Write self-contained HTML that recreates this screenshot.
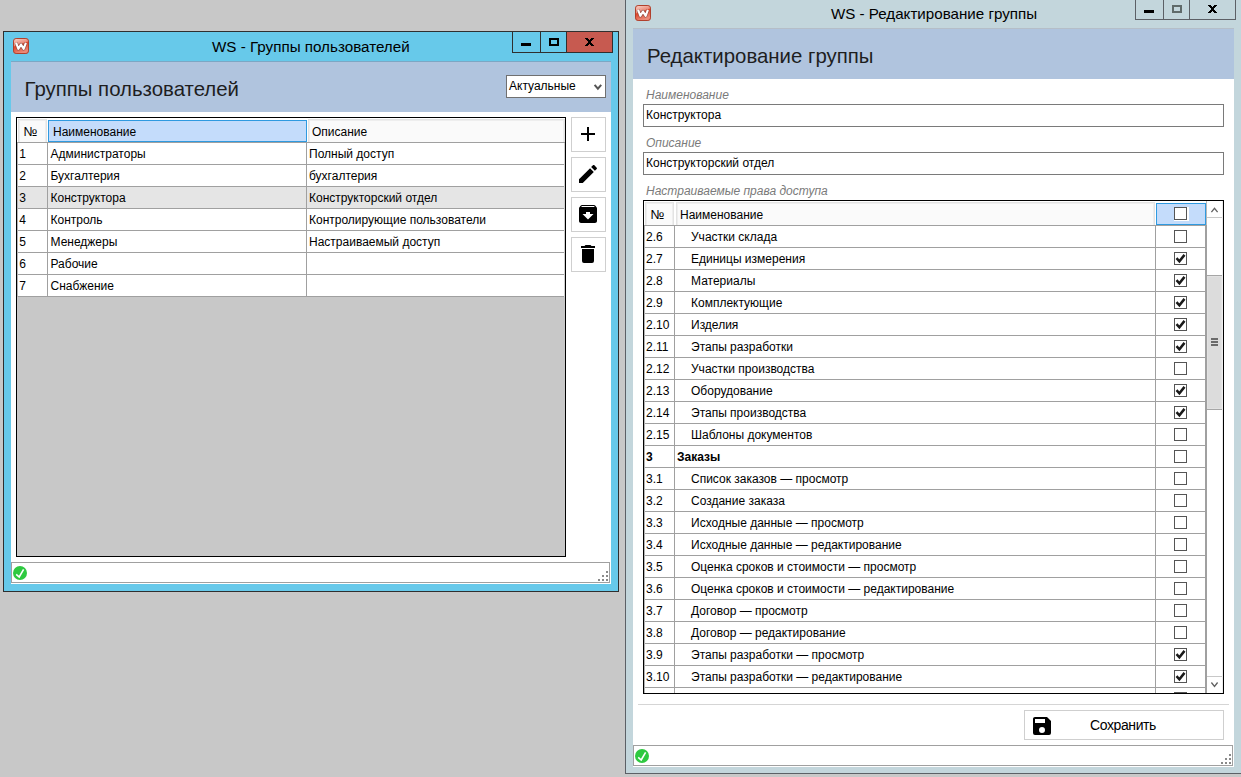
<!DOCTYPE html>
<html><head><meta charset="utf-8"><style>
html,body{margin:0;padding:0;}
body{width:1241px;height:777px;overflow:hidden;position:relative;background:#c8c8c8;font-family:"Liberation Sans", sans-serif;color:#000;}
body>div,body>svg{position:absolute;}
.t{white-space:nowrap;}
</style></head><body>
<div style="left:3px;top:31px;width:616px;height:561px;background:#67c9ea;box-sizing:border-box;border:1px solid #2f2f2f;"></div>
<svg style="left:13px;top:38px" width="16" height="16" viewBox="0 0 16 16"><defs><linearGradient id="wg" x1="0" y1="0" x2="0.35" y2="1"><stop offset="0" stop-color="#fad6cc"/><stop offset="0.44" stop-color="#ec8f7e"/><stop offset="0.52" stop-color="#de4328"/><stop offset="1" stop-color="#eb8a78"/></linearGradient></defs><rect x="0.5" y="0.5" width="15" height="15" rx="2.6" fill="url(#wg)" stroke="#b0402c" stroke-width="1"/><path d="M3.1 4.9 L5.4 10.8 L8 6.5 L10.6 10.8 L12.9 4.9" fill="none" stroke="#6a4a44" stroke-opacity="0.6" stroke-width="3.5" stroke-linejoin="round"/><path d="M3.1 4.9 L5.4 10.8 L8 6.5 L10.6 10.8 L12.9 4.9" fill="none" stroke="#fff" stroke-width="2.1" stroke-linejoin="round"/></svg>
<div class="t" style="left:212px;top:38.63px;font-size:15.2px;line-height:15.2px;color:#000;">WS - Группы пользователей</div>
<div style="left:512px;top:31px;width:101px;height:22px;box-sizing:border-box;border:1px solid #2f2f2f;border-top:none;"></div>
<div style="left:540px;top:31px;width:1px;height:22px;background:#2f2f2f;"></div>
<div style="left:566px;top:32px;width:47px;height:21px;background:#c75a50;box-sizing:border-box;border:1px solid #2f2f2f;border-top:none;border-left:1px solid #2f2f2f;"></div>
<div style="left:521px;top:43px;width:10px;height:3px;background:#000;"></div>
<div style="left:549px;top:38px;width:10px;height:8px;box-sizing:border-box;border:2px solid #000;border-top-width:2px;"></div>
<div style="left:585px;top:38px;width:3px;height:1px;background:#000;"></div>
<div style="left:591px;top:38px;width:3px;height:1px;background:#000;"></div>
<div style="left:586px;top:39px;width:3px;height:1px;background:#000;"></div>
<div style="left:590px;top:39px;width:3px;height:1px;background:#000;"></div>
<div style="left:587px;top:40px;width:5px;height:1px;background:#000;"></div>
<div style="left:588px;top:41px;width:3px;height:1px;background:#000;"></div>
<div style="left:588px;top:42px;width:3px;height:1px;background:#000;"></div>
<div style="left:587px;top:43px;width:5px;height:1px;background:#000;"></div>
<div style="left:586px;top:44px;width:3px;height:1px;background:#000;"></div>
<div style="left:590px;top:44px;width:3px;height:1px;background:#000;"></div>
<div style="left:585px;top:45px;width:3px;height:1px;background:#000;"></div>
<div style="left:591px;top:45px;width:3px;height:1px;background:#000;"></div>
<div style="left:11px;top:61px;width:600px;height:523px;background:#fff;"></div>
<div style="left:11px;top:61px;width:600px;height:51px;background:#b0c4de;"></div>
<div style="left:11px;top:61px;width:600px;height:1px;background:#7ca7c4;"></div>
<div class="t" style="left:24.5px;top:78.73px;font-size:20.4px;line-height:20.4px;color:#1e1e1e;">Группы пользователей</div>
<div style="left:506px;top:75px;width:100px;height:23px;background:#fff;box-sizing:border-box;border:1px solid #707070;"></div>
<div class="t" style="left:509px;top:79.64px;font-size:12px;line-height:12px;color:#000;">Актуальные</div>
<svg style="left:593px;top:83px" width="10" height="8" viewBox="0 0 10 8"><path d="M1.6 1.8 L4.9 5.6 L8.2 1.8" fill="none" stroke="#555" stroke-width="2"/></svg>
<div style="left:16px;top:117px;width:550px;height:440px;background:#c8c8c8;box-sizing:border-box;border:1px solid #000;"></div>
<div style="left:17px;top:118px;width:548px;height:24px;background:#fff;"></div>
<div style="left:18px;top:119px;width:29px;height:23px;background:#fafafa;box-sizing:border-box;border:1px solid #e3e3e3;border-bottom:none;box-shadow:inset 1px 1px 0 #eeeeee, inset -1px 0 0 #eeeeee;"></div>
<div style="left:48px;top:120px;width:259px;height:22px;background:#c4dcfb;box-sizing:border-box;border:1px solid #2f9ae0;"></div>
<div style="left:308px;top:119px;width:257px;height:23px;background:#fafafa;box-sizing:border-box;border:1px solid #e3e3e3;border-bottom:none;box-shadow:inset 1px 1px 0 #eeeeee, inset -1px 0 0 #eeeeee;"></div>
<div style="left:17px;top:142px;width:548px;height:1px;background:#a0a0a0;"></div>
<div class="t" style="left:23.6px;top:125.20px;font-size:13px;line-height:13px;">№</div>
<div class="t" style="left:53px;top:125.84px;font-size:12px;line-height:12px;">Наименование</div>
<div class="t" style="left:312px;top:125.84px;font-size:12px;line-height:12px;">Описание</div>
<div style="left:17px;top:143px;width:548px;height:21px;background:#fff;"></div>
<div style="left:17px;top:164px;width:548px;height:1px;background:#a0a0a0;"></div>
<div style="left:47px;top:143px;width:1px;height:21px;background:#a0a0a0;"></div>
<div style="left:306px;top:143px;width:1px;height:21px;background:#a0a0a0;"></div>
<div class="t" style="left:19.3px;top:147.84px;font-size:12px;line-height:12px;">1</div>
<div class="t" style="left:50.5px;top:147.84px;font-size:12px;line-height:12px;">Администраторы</div>
<div class="t" style="left:309px;top:147.84px;font-size:12px;line-height:12px;">Полный доступ</div>
<div style="left:17px;top:165px;width:548px;height:21px;background:#fff;"></div>
<div style="left:17px;top:186px;width:548px;height:1px;background:#a0a0a0;"></div>
<div style="left:47px;top:165px;width:1px;height:21px;background:#a0a0a0;"></div>
<div style="left:306px;top:165px;width:1px;height:21px;background:#a0a0a0;"></div>
<div class="t" style="left:19.3px;top:169.84px;font-size:12px;line-height:12px;">2</div>
<div class="t" style="left:50.5px;top:169.84px;font-size:12px;line-height:12px;">Бухгалтерия</div>
<div class="t" style="left:309px;top:169.84px;font-size:12px;line-height:12px;">бухгалтерия</div>
<div style="left:17px;top:187px;width:548px;height:21px;background:#e5e5e5;"></div>
<div style="left:17px;top:208px;width:548px;height:1px;background:#a0a0a0;"></div>
<div style="left:47px;top:187px;width:1px;height:21px;background:#a0a0a0;"></div>
<div style="left:306px;top:187px;width:1px;height:21px;background:#a0a0a0;"></div>
<div class="t" style="left:19.3px;top:191.84px;font-size:12px;line-height:12px;">3</div>
<div class="t" style="left:50.5px;top:191.84px;font-size:12px;line-height:12px;">Конструктора</div>
<div class="t" style="left:309px;top:191.84px;font-size:12px;line-height:12px;">Конструкторский отдел</div>
<div style="left:17px;top:209px;width:548px;height:21px;background:#fff;"></div>
<div style="left:17px;top:230px;width:548px;height:1px;background:#a0a0a0;"></div>
<div style="left:47px;top:209px;width:1px;height:21px;background:#a0a0a0;"></div>
<div style="left:306px;top:209px;width:1px;height:21px;background:#a0a0a0;"></div>
<div class="t" style="left:19.3px;top:213.84px;font-size:12px;line-height:12px;">4</div>
<div class="t" style="left:50.5px;top:213.84px;font-size:12px;line-height:12px;">Контроль</div>
<div class="t" style="left:309px;top:213.84px;font-size:12px;line-height:12px;">Контролирующие пользователи</div>
<div style="left:17px;top:231px;width:548px;height:21px;background:#fff;"></div>
<div style="left:17px;top:252px;width:548px;height:1px;background:#a0a0a0;"></div>
<div style="left:47px;top:231px;width:1px;height:21px;background:#a0a0a0;"></div>
<div style="left:306px;top:231px;width:1px;height:21px;background:#a0a0a0;"></div>
<div class="t" style="left:19.3px;top:235.84px;font-size:12px;line-height:12px;">5</div>
<div class="t" style="left:50.5px;top:235.84px;font-size:12px;line-height:12px;">Менеджеры</div>
<div class="t" style="left:309px;top:235.84px;font-size:12px;line-height:12px;">Настраиваемый доступ</div>
<div style="left:17px;top:253px;width:548px;height:21px;background:#fff;"></div>
<div style="left:17px;top:274px;width:548px;height:1px;background:#a0a0a0;"></div>
<div style="left:47px;top:253px;width:1px;height:21px;background:#a0a0a0;"></div>
<div style="left:306px;top:253px;width:1px;height:21px;background:#a0a0a0;"></div>
<div class="t" style="left:19.3px;top:257.84px;font-size:12px;line-height:12px;">6</div>
<div class="t" style="left:50.5px;top:257.84px;font-size:12px;line-height:12px;">Рабочие</div>
<div class="t" style="left:309px;top:257.84px;font-size:12px;line-height:12px;"></div>
<div style="left:17px;top:275px;width:548px;height:21px;background:#fff;"></div>
<div style="left:17px;top:296px;width:548px;height:1px;background:#a0a0a0;"></div>
<div style="left:47px;top:275px;width:1px;height:21px;background:#a0a0a0;"></div>
<div style="left:306px;top:275px;width:1px;height:21px;background:#a0a0a0;"></div>
<div class="t" style="left:19.3px;top:279.84px;font-size:12px;line-height:12px;">7</div>
<div class="t" style="left:50.5px;top:279.84px;font-size:12px;line-height:12px;">Снабжение</div>
<div class="t" style="left:309px;top:279.84px;font-size:12px;line-height:12px;"></div>
<div style="left:17px;top:143px;width:1px;height:154px;background:#b4b4b4;"></div>
<div style="left:564px;top:143px;width:1px;height:154px;background:#cfcfcf;"></div>
<div style="left:571px;top:117px;width:35px;height:35px;background:#fff;box-sizing:border-box;border:1px solid #cfcfcf;"></div>
<svg style="left:576px;top:122px" width="24" height="24" viewBox="0 0 24 24"><path d="M19,13H13V19H11V13H5V11H11V5H13V11H19V13Z" fill="#000"/></svg>
<div style="left:571px;top:157px;width:35px;height:35px;background:#fff;box-sizing:border-box;border:1px solid #cfcfcf;"></div>
<svg style="left:576px;top:162px" width="24" height="24" viewBox="0 0 24 24"><path d="M20.71,7.04C21.1,6.65 21.1,6 20.71,5.63L18.37,3.29C18,2.9 17.35,2.9 16.96,3.29L15.12,5.12L18.87,8.87M3,17.25V21H6.75L17.81,9.93L14.06,6.18L3,17.25Z" fill="#000"/></svg>
<div style="left:571px;top:197px;width:35px;height:35px;background:#fff;box-sizing:border-box;border:1px solid #cfcfcf;"></div>
<svg style="left:576px;top:202px" width="24" height="24" viewBox="0 0 24 24"><path d="M20.54 5.23L19.15 3.55C18.88 3.21 18.47 3 18 3H6C5.53 3 5.12 3.21 4.84 3.55L3.46 5.23C3.17 5.57 3 6 3 6.5V19C3 20.1 3.9 21 5 21H19C20.1 21 21 20.1 21 19V6.5C21 6 20.83 5.57 20.54 5.23M12 17.5L6.5 12H10V10H14V12H17.5L12 17.5M5.12 5L5.93 4H17.93L18.87 5H5.12Z" fill="#000"/></svg>
<div style="left:571px;top:237px;width:35px;height:35px;background:#fff;box-sizing:border-box;border:1px solid #cfcfcf;"></div>
<svg style="left:576px;top:242px" width="24" height="24" viewBox="0 0 24 24"><path d="M19,4H15.5L14.5,3H9.5L8.5,4H5V6H19M6,19A2,2 0 0,0 8,21H16A2,2 0 0,0 18,19V7H6V19Z" fill="#000"/></svg>
<div style="left:11px;top:562px;width:599px;height:21px;background:#fff;box-sizing:border-box;border:1px solid #a0a0a0;"></div>
<svg style="left:13px;top:566px" width="14" height="14" viewBox="0 0 14 14"><circle cx="7" cy="7" r="7" fill="#2ec940"/><path d="M3.2 8.4 L6.2 11.0 L10.6 3.4" fill="none" stroke="#fff" stroke-width="1.6"/></svg>
<div style="left:606px;top:579px;width:2px;height:2px;background:#8a8a8a;"></div>
<div style="left:602px;top:579px;width:2px;height:2px;background:#8a8a8a;"></div>
<div style="left:598px;top:579px;width:2px;height:2px;background:#8a8a8a;"></div>
<div style="left:606px;top:575px;width:2px;height:2px;background:#8a8a8a;"></div>
<div style="left:602px;top:575px;width:2px;height:2px;background:#8a8a8a;"></div>
<div style="left:606px;top:571px;width:2px;height:2px;background:#8a8a8a;"></div>
<div style="left:625px;top:-10px;width:626px;height:784px;background:#c3d6dc;box-sizing:border-box;border:1px solid #5c6066;"></div>
<svg style="left:635px;top:5px" width="16" height="16" viewBox="0 0 16 16"><defs><linearGradient id="wg2" x1="0" y1="0" x2="0.35" y2="1"><stop offset="0" stop-color="#fad6cc"/><stop offset="0.44" stop-color="#ec8f7e"/><stop offset="0.52" stop-color="#de4328"/><stop offset="1" stop-color="#eb8a78"/></linearGradient></defs><rect x="0.5" y="0.5" width="15" height="15" rx="2.6" fill="url(#wg2)" stroke="#b0402c" stroke-width="1"/><path d="M3.1 4.9 L5.4 10.8 L8 6.5 L10.6 10.8 L12.9 4.9" fill="none" stroke="#6a4a44" stroke-opacity="0.6" stroke-width="3.5" stroke-linejoin="round"/><path d="M3.1 4.9 L5.4 10.8 L8 6.5 L10.6 10.8 L12.9 4.9" fill="none" stroke="#fff" stroke-width="2.1" stroke-linejoin="round"/></svg>
<div class="t" style="left:831px;top:6.18px;font-size:15.15px;line-height:15.15px;color:#000;">WS - Редактирование группы</div>
<div style="left:1135px;top:-1px;width:101px;height:21px;box-sizing:border-box;border:1px solid #5c6066;border-top:none;"></div>
<div style="left:1163px;top:0px;width:1px;height:20px;background:#5c6066;"></div>
<div style="left:1189px;top:0px;width:1px;height:20px;background:#5c6066;"></div>
<div style="left:1144px;top:10px;width:10px;height:3px;background:#000;"></div>
<div style="left:1172px;top:5px;width:10px;height:8px;box-sizing:border-box;border:2px solid #5f6a6a;"></div>
<div style="left:1208px;top:5px;width:3px;height:1px;background:#000;"></div>
<div style="left:1214px;top:5px;width:3px;height:1px;background:#000;"></div>
<div style="left:1209px;top:6px;width:3px;height:1px;background:#000;"></div>
<div style="left:1213px;top:6px;width:3px;height:1px;background:#000;"></div>
<div style="left:1210px;top:7px;width:5px;height:1px;background:#000;"></div>
<div style="left:1211px;top:8px;width:3px;height:1px;background:#000;"></div>
<div style="left:1211px;top:9px;width:3px;height:1px;background:#000;"></div>
<div style="left:1210px;top:10px;width:5px;height:1px;background:#000;"></div>
<div style="left:1209px;top:11px;width:3px;height:1px;background:#000;"></div>
<div style="left:1213px;top:11px;width:3px;height:1px;background:#000;"></div>
<div style="left:1208px;top:12px;width:3px;height:1px;background:#000;"></div>
<div style="left:1214px;top:12px;width:3px;height:1px;background:#000;"></div>
<div style="left:633px;top:28px;width:601px;height:739px;background:#fff;"></div>
<div style="left:633px;top:28px;width:601px;height:51px;background:#b0c4de;"></div>
<div style="left:633px;top:28px;width:601px;height:1px;background:#b5bec8;"></div>
<div class="t" style="left:647px;top:46.43px;font-size:20.4px;line-height:20.4px;color:#1e1e1e;">Редактирование группы</div>
<div class="t" style="left:646px;top:88.84px;font-size:12px;line-height:12px;color:#7a7a7a;font-style:italic;">Наименование</div>
<div style="left:643px;top:104px;width:581px;height:23px;background:#fff;box-sizing:border-box;border:1px solid #7a7a7a;"></div>
<div class="t" style="left:646px;top:108.84px;font-size:12px;line-height:12px;">Конструктора</div>
<div class="t" style="left:646px;top:136.84px;font-size:12px;line-height:12px;color:#7a7a7a;font-style:italic;">Описание</div>
<div style="left:643px;top:152px;width:581px;height:23px;background:#fff;box-sizing:border-box;border:1px solid #7a7a7a;"></div>
<div class="t" style="left:646px;top:156.84px;font-size:12px;line-height:12px;">Конструкторский отдел</div>
<div class="t" style="left:646px;top:185.34px;font-size:12px;line-height:12px;color:#7a7a7a;font-style:italic;">Настраиваемые права доступа</div>
<div style="left:643px;top:200px;width:581px;height:494px;background:#fff;box-sizing:border-box;border:1px solid #000;"></div>
<div style="left:644px;top:201px;width:562px;height:24px;background:#fff;"></div>
<div style="left:645px;top:202px;width:29px;height:23px;background:#fafafa;box-sizing:border-box;border:1px solid #e3e3e3;border-bottom:none;box-shadow:inset 1px 1px 0 #eeeeee, inset -1px 0 0 #eeeeee;"></div>
<div style="left:676px;top:202px;width:479px;height:23px;background:#fafafa;box-sizing:border-box;border:1px solid #e3e3e3;border-bottom:none;box-shadow:inset 1px 1px 0 #eeeeee, inset -1px 0 0 #eeeeee;"></div>
<div style="left:1156px;top:203px;width:50px;height:22px;background:#c4dcfb;box-sizing:border-box;border:1px solid #2f9ae0;"></div>
<div style="left:644px;top:225px;width:562px;height:1px;background:#a0a0a0;"></div>
<div class="t" style="left:650.6px;top:208.20px;font-size:13px;line-height:13px;">№</div>
<div class="t" style="left:680px;top:208.84px;font-size:12px;line-height:12px;">Наименование</div>
<div style="left:1174px;top:207px;width:15px;height:14px;background:#fff;"></div>
<div style="left:1174px;top:207px;width:13px;height:13px;box-sizing:border-box;border:1px solid #555;background:#fff;"></div>
<div style="left:674px;top:226px;width:1px;height:21px;background:#a0a0a0;"></div>
<div style="left:1155px;top:226px;width:1px;height:21px;background:#a0a0a0;"></div>
<div style="left:644px;top:247px;width:562px;height:1px;background:#a0a0a0;"></div>
<div class="t" style="left:646px;top:230.84px;font-size:12px;line-height:12px;">2.6</div>
<div class="t" style="left:691px;top:230.84px;font-size:12px;line-height:12px;">Участки склада</div>
<div style="left:1174px;top:230px;width:13px;height:13px;box-sizing:border-box;border:1px solid #555;background:#fff;"></div>
<div style="left:674px;top:248px;width:1px;height:21px;background:#a0a0a0;"></div>
<div style="left:1155px;top:248px;width:1px;height:21px;background:#a0a0a0;"></div>
<div style="left:644px;top:269px;width:562px;height:1px;background:#a0a0a0;"></div>
<div class="t" style="left:646px;top:252.84px;font-size:12px;line-height:12px;">2.7</div>
<div class="t" style="left:691px;top:252.84px;font-size:12px;line-height:12px;">Единицы измерения</div>
<div style="left:1174px;top:252px;width:13px;height:13px;box-sizing:border-box;border:1px solid #555;background:#fff;"></div>
<svg style="left:1174px;top:252px" width="13" height="13" viewBox="0 0 13 13"><path d="M2.5 6.2 L5.4 9.3 L10.5 2.9" fill="none" stroke="#1a1a1a" stroke-width="2.5"/></svg>
<div style="left:674px;top:270px;width:1px;height:21px;background:#a0a0a0;"></div>
<div style="left:1155px;top:270px;width:1px;height:21px;background:#a0a0a0;"></div>
<div style="left:644px;top:291px;width:562px;height:1px;background:#a0a0a0;"></div>
<div class="t" style="left:646px;top:274.84px;font-size:12px;line-height:12px;">2.8</div>
<div class="t" style="left:691px;top:274.84px;font-size:12px;line-height:12px;">Материалы</div>
<div style="left:1174px;top:274px;width:13px;height:13px;box-sizing:border-box;border:1px solid #555;background:#fff;"></div>
<svg style="left:1174px;top:274px" width="13" height="13" viewBox="0 0 13 13"><path d="M2.5 6.2 L5.4 9.3 L10.5 2.9" fill="none" stroke="#1a1a1a" stroke-width="2.5"/></svg>
<div style="left:674px;top:292px;width:1px;height:21px;background:#a0a0a0;"></div>
<div style="left:1155px;top:292px;width:1px;height:21px;background:#a0a0a0;"></div>
<div style="left:644px;top:313px;width:562px;height:1px;background:#a0a0a0;"></div>
<div class="t" style="left:646px;top:296.84px;font-size:12px;line-height:12px;">2.9</div>
<div class="t" style="left:691px;top:296.84px;font-size:12px;line-height:12px;">Комплектующие</div>
<div style="left:1174px;top:296px;width:13px;height:13px;box-sizing:border-box;border:1px solid #555;background:#fff;"></div>
<svg style="left:1174px;top:296px" width="13" height="13" viewBox="0 0 13 13"><path d="M2.5 6.2 L5.4 9.3 L10.5 2.9" fill="none" stroke="#1a1a1a" stroke-width="2.5"/></svg>
<div style="left:674px;top:314px;width:1px;height:21px;background:#a0a0a0;"></div>
<div style="left:1155px;top:314px;width:1px;height:21px;background:#a0a0a0;"></div>
<div style="left:644px;top:335px;width:562px;height:1px;background:#a0a0a0;"></div>
<div class="t" style="left:646px;top:318.84px;font-size:12px;line-height:12px;">2.10</div>
<div class="t" style="left:691px;top:318.84px;font-size:12px;line-height:12px;">Изделия</div>
<div style="left:1174px;top:318px;width:13px;height:13px;box-sizing:border-box;border:1px solid #555;background:#fff;"></div>
<svg style="left:1174px;top:318px" width="13" height="13" viewBox="0 0 13 13"><path d="M2.5 6.2 L5.4 9.3 L10.5 2.9" fill="none" stroke="#1a1a1a" stroke-width="2.5"/></svg>
<div style="left:674px;top:336px;width:1px;height:21px;background:#a0a0a0;"></div>
<div style="left:1155px;top:336px;width:1px;height:21px;background:#a0a0a0;"></div>
<div style="left:644px;top:357px;width:562px;height:1px;background:#a0a0a0;"></div>
<div class="t" style="left:646px;top:340.84px;font-size:12px;line-height:12px;">2.11</div>
<div class="t" style="left:691px;top:340.84px;font-size:12px;line-height:12px;">Этапы разработки</div>
<div style="left:1174px;top:340px;width:13px;height:13px;box-sizing:border-box;border:1px solid #555;background:#fff;"></div>
<svg style="left:1174px;top:340px" width="13" height="13" viewBox="0 0 13 13"><path d="M2.5 6.2 L5.4 9.3 L10.5 2.9" fill="none" stroke="#1a1a1a" stroke-width="2.5"/></svg>
<div style="left:674px;top:358px;width:1px;height:21px;background:#a0a0a0;"></div>
<div style="left:1155px;top:358px;width:1px;height:21px;background:#a0a0a0;"></div>
<div style="left:644px;top:379px;width:562px;height:1px;background:#a0a0a0;"></div>
<div class="t" style="left:646px;top:362.84px;font-size:12px;line-height:12px;">2.12</div>
<div class="t" style="left:691px;top:362.84px;font-size:12px;line-height:12px;">Участки производства</div>
<div style="left:1174px;top:362px;width:13px;height:13px;box-sizing:border-box;border:1px solid #555;background:#fff;"></div>
<div style="left:674px;top:380px;width:1px;height:21px;background:#a0a0a0;"></div>
<div style="left:1155px;top:380px;width:1px;height:21px;background:#a0a0a0;"></div>
<div style="left:644px;top:401px;width:562px;height:1px;background:#a0a0a0;"></div>
<div class="t" style="left:646px;top:384.84px;font-size:12px;line-height:12px;">2.13</div>
<div class="t" style="left:691px;top:384.84px;font-size:12px;line-height:12px;">Оборудование</div>
<div style="left:1174px;top:384px;width:13px;height:13px;box-sizing:border-box;border:1px solid #555;background:#fff;"></div>
<svg style="left:1174px;top:384px" width="13" height="13" viewBox="0 0 13 13"><path d="M2.5 6.2 L5.4 9.3 L10.5 2.9" fill="none" stroke="#1a1a1a" stroke-width="2.5"/></svg>
<div style="left:674px;top:402px;width:1px;height:21px;background:#a0a0a0;"></div>
<div style="left:1155px;top:402px;width:1px;height:21px;background:#a0a0a0;"></div>
<div style="left:644px;top:423px;width:562px;height:1px;background:#a0a0a0;"></div>
<div class="t" style="left:646px;top:406.84px;font-size:12px;line-height:12px;">2.14</div>
<div class="t" style="left:691px;top:406.84px;font-size:12px;line-height:12px;">Этапы производства</div>
<div style="left:1174px;top:406px;width:13px;height:13px;box-sizing:border-box;border:1px solid #555;background:#fff;"></div>
<svg style="left:1174px;top:406px" width="13" height="13" viewBox="0 0 13 13"><path d="M2.5 6.2 L5.4 9.3 L10.5 2.9" fill="none" stroke="#1a1a1a" stroke-width="2.5"/></svg>
<div style="left:674px;top:424px;width:1px;height:21px;background:#a0a0a0;"></div>
<div style="left:1155px;top:424px;width:1px;height:21px;background:#a0a0a0;"></div>
<div style="left:644px;top:445px;width:562px;height:1px;background:#a0a0a0;"></div>
<div class="t" style="left:646px;top:428.84px;font-size:12px;line-height:12px;">2.15</div>
<div class="t" style="left:691px;top:428.84px;font-size:12px;line-height:12px;">Шаблоны документов</div>
<div style="left:1174px;top:428px;width:13px;height:13px;box-sizing:border-box;border:1px solid #555;background:#fff;"></div>
<div style="left:674px;top:446px;width:1px;height:21px;background:#a0a0a0;"></div>
<div style="left:1155px;top:446px;width:1px;height:21px;background:#a0a0a0;"></div>
<div style="left:644px;top:467px;width:562px;height:1px;background:#a0a0a0;"></div>
<div class="t" style="left:646px;top:450.84px;font-size:12px;line-height:12px;font-weight:bold;">3</div>
<div class="t" style="left:677px;top:450.84px;font-size:12px;line-height:12px;font-weight:bold;">Заказы</div>
<div style="left:1174px;top:450px;width:13px;height:13px;box-sizing:border-box;border:1px solid #555;background:#fff;"></div>
<div style="left:674px;top:468px;width:1px;height:21px;background:#a0a0a0;"></div>
<div style="left:1155px;top:468px;width:1px;height:21px;background:#a0a0a0;"></div>
<div style="left:644px;top:489px;width:562px;height:1px;background:#a0a0a0;"></div>
<div class="t" style="left:646px;top:472.84px;font-size:12px;line-height:12px;">3.1</div>
<div class="t" style="left:691px;top:472.84px;font-size:12px;line-height:12px;">Список заказов — просмотр</div>
<div style="left:1174px;top:472px;width:13px;height:13px;box-sizing:border-box;border:1px solid #555;background:#fff;"></div>
<div style="left:674px;top:490px;width:1px;height:21px;background:#a0a0a0;"></div>
<div style="left:1155px;top:490px;width:1px;height:21px;background:#a0a0a0;"></div>
<div style="left:644px;top:511px;width:562px;height:1px;background:#a0a0a0;"></div>
<div class="t" style="left:646px;top:494.84px;font-size:12px;line-height:12px;">3.2</div>
<div class="t" style="left:691px;top:494.84px;font-size:12px;line-height:12px;">Создание заказа</div>
<div style="left:1174px;top:494px;width:13px;height:13px;box-sizing:border-box;border:1px solid #555;background:#fff;"></div>
<div style="left:674px;top:512px;width:1px;height:21px;background:#a0a0a0;"></div>
<div style="left:1155px;top:512px;width:1px;height:21px;background:#a0a0a0;"></div>
<div style="left:644px;top:533px;width:562px;height:1px;background:#a0a0a0;"></div>
<div class="t" style="left:646px;top:516.84px;font-size:12px;line-height:12px;">3.3</div>
<div class="t" style="left:691px;top:516.84px;font-size:12px;line-height:12px;">Исходные данные — просмотр</div>
<div style="left:1174px;top:516px;width:13px;height:13px;box-sizing:border-box;border:1px solid #555;background:#fff;"></div>
<div style="left:674px;top:534px;width:1px;height:21px;background:#a0a0a0;"></div>
<div style="left:1155px;top:534px;width:1px;height:21px;background:#a0a0a0;"></div>
<div style="left:644px;top:555px;width:562px;height:1px;background:#a0a0a0;"></div>
<div class="t" style="left:646px;top:538.84px;font-size:12px;line-height:12px;">3.4</div>
<div class="t" style="left:691px;top:538.84px;font-size:12px;line-height:12px;">Исходные данные — редактирование</div>
<div style="left:1174px;top:538px;width:13px;height:13px;box-sizing:border-box;border:1px solid #555;background:#fff;"></div>
<div style="left:674px;top:556px;width:1px;height:21px;background:#a0a0a0;"></div>
<div style="left:1155px;top:556px;width:1px;height:21px;background:#a0a0a0;"></div>
<div style="left:644px;top:577px;width:562px;height:1px;background:#a0a0a0;"></div>
<div class="t" style="left:646px;top:560.84px;font-size:12px;line-height:12px;">3.5</div>
<div class="t" style="left:691px;top:560.84px;font-size:12px;line-height:12px;">Оценка сроков и стоимости — просмотр</div>
<div style="left:1174px;top:560px;width:13px;height:13px;box-sizing:border-box;border:1px solid #555;background:#fff;"></div>
<div style="left:674px;top:578px;width:1px;height:21px;background:#a0a0a0;"></div>
<div style="left:1155px;top:578px;width:1px;height:21px;background:#a0a0a0;"></div>
<div style="left:644px;top:599px;width:562px;height:1px;background:#a0a0a0;"></div>
<div class="t" style="left:646px;top:582.84px;font-size:12px;line-height:12px;">3.6</div>
<div class="t" style="left:691px;top:582.84px;font-size:12px;line-height:12px;">Оценка сроков и стоимости — редактирование</div>
<div style="left:1174px;top:582px;width:13px;height:13px;box-sizing:border-box;border:1px solid #555;background:#fff;"></div>
<div style="left:674px;top:600px;width:1px;height:21px;background:#a0a0a0;"></div>
<div style="left:1155px;top:600px;width:1px;height:21px;background:#a0a0a0;"></div>
<div style="left:644px;top:621px;width:562px;height:1px;background:#a0a0a0;"></div>
<div class="t" style="left:646px;top:604.84px;font-size:12px;line-height:12px;">3.7</div>
<div class="t" style="left:691px;top:604.84px;font-size:12px;line-height:12px;">Договор — просмотр</div>
<div style="left:1174px;top:604px;width:13px;height:13px;box-sizing:border-box;border:1px solid #555;background:#fff;"></div>
<div style="left:674px;top:622px;width:1px;height:21px;background:#a0a0a0;"></div>
<div style="left:1155px;top:622px;width:1px;height:21px;background:#a0a0a0;"></div>
<div style="left:644px;top:643px;width:562px;height:1px;background:#a0a0a0;"></div>
<div class="t" style="left:646px;top:626.84px;font-size:12px;line-height:12px;">3.8</div>
<div class="t" style="left:691px;top:626.84px;font-size:12px;line-height:12px;">Договор — редактирование</div>
<div style="left:1174px;top:626px;width:13px;height:13px;box-sizing:border-box;border:1px solid #555;background:#fff;"></div>
<div style="left:674px;top:644px;width:1px;height:21px;background:#a0a0a0;"></div>
<div style="left:1155px;top:644px;width:1px;height:21px;background:#a0a0a0;"></div>
<div style="left:644px;top:665px;width:562px;height:1px;background:#a0a0a0;"></div>
<div class="t" style="left:646px;top:648.84px;font-size:12px;line-height:12px;">3.9</div>
<div class="t" style="left:691px;top:648.84px;font-size:12px;line-height:12px;">Этапы разработки — просмотр</div>
<div style="left:1174px;top:648px;width:13px;height:13px;box-sizing:border-box;border:1px solid #555;background:#fff;"></div>
<svg style="left:1174px;top:648px" width="13" height="13" viewBox="0 0 13 13"><path d="M2.5 6.2 L5.4 9.3 L10.5 2.9" fill="none" stroke="#1a1a1a" stroke-width="2.5"/></svg>
<div style="left:674px;top:666px;width:1px;height:21px;background:#a0a0a0;"></div>
<div style="left:1155px;top:666px;width:1px;height:21px;background:#a0a0a0;"></div>
<div style="left:644px;top:687px;width:562px;height:1px;background:#a0a0a0;"></div>
<div class="t" style="left:646px;top:670.84px;font-size:12px;line-height:12px;">3.10</div>
<div class="t" style="left:691px;top:670.84px;font-size:12px;line-height:12px;">Этапы разработки — редактирование</div>
<div style="left:1174px;top:670px;width:13px;height:13px;box-sizing:border-box;border:1px solid #555;background:#fff;"></div>
<svg style="left:1174px;top:670px" width="13" height="13" viewBox="0 0 13 13"><path d="M2.5 6.2 L5.4 9.3 L10.5 2.9" fill="none" stroke="#1a1a1a" stroke-width="2.5"/></svg>
<div style="left:674px;top:688px;width:1px;height:5px;background:#a0a0a0;"></div>
<div style="left:1155px;top:688px;width:1px;height:5px;background:#a0a0a0;"></div>
<div style="left:1174px;top:692px;width:13px;height:1px;background:#555;"></div>
<div style="left:1206px;top:201px;width:17px;height:492px;background:#fff;"></div>
<div style="left:1205px;top:225px;width:2px;height:468px;background:#a0a0a0;"></div>
<div style="left:644px;top:226px;width:1px;height:467px;background:#b4b4b4;"></div>
<div style="left:1206px;top:201px;width:1px;height:24px;background:#b8b8b8;"></div>
<div style="left:1222px;top:201px;width:1px;height:492px;background:#ececec;"></div>
<div style="left:1207px;top:217px;width:15px;height:1px;background:#c8c8c8;"></div>
<div style="left:1207px;top:676px;width:15px;height:1px;background:#c8c8c8;"></div>
<svg style="left:1209px;top:206px" width="11" height="9" viewBox="0 0 11 9"><path d="M2.4 6.2 L5.5 2.3 L8.6 6.2" fill="none" stroke="#606060" stroke-width="1.3"/></svg>
<svg style="left:1209px;top:680px" width="11" height="9" viewBox="0 0 11 9"><path d="M2.4 2.5 L5.5 6.4 L8.6 2.5" fill="none" stroke="#606060" stroke-width="1.3"/></svg>
<div style="left:1207px;top:275px;width:15px;height:135px;background:#dcdcdc;box-sizing:border-box;border-top:1px solid #a6a6a6;border-bottom:1px solid #a6a6a6;box-shadow:inset 0 0 0 1px #e2e2e2;"></div>
<div style="left:1207px;top:275px;width:15px;height:1px;background:#a6a6a6;"></div>
<div style="left:1207px;top:409px;width:15px;height:1px;background:#a6a6a6;"></div>
<div style="left:1211px;top:338px;width:7px;height:2px;background:#6b6b6b;"></div>
<div style="left:1211px;top:341px;width:7px;height:2px;background:#6b6b6b;"></div>
<div style="left:1211px;top:344px;width:7px;height:2px;background:#6b6b6b;"></div>
<div style="left:638px;top:704px;width:591px;height:1px;background:#d5d5d5;"></div>
<div style="left:1024px;top:710px;width:200px;height:30px;background:#fff;box-sizing:border-box;border:1px solid #cfcfcf;"></div>
<svg style="left:1030px;top:714px" width="24" height="24" viewBox="0 0 24 24"><path d="M15,9H5V5H15M12,19A3,3 0 0,1 9,16A3,3 0 0,1 12,13A3,3 0 0,1 15,16A3,3 0 0,1 12,19M17,3H5C3.89,3 3,3.9 3,5V19A2,2 0 0,0 5,21H19A2,2 0 0,0 21,19V7L17,3Z" fill="#000"/></svg>
<div class="t" style="left:1090px;top:718.15px;font-size:14px;line-height:14px;color:#000;letter-spacing:-0.4px;">Сохранить</div>
<div style="left:633px;top:745px;width:600px;height:21px;background:#fff;box-sizing:border-box;border:1px solid #a0a0a0;"></div>
<svg style="left:635px;top:749px" width="14" height="14" viewBox="0 0 14 14"><circle cx="7" cy="7" r="7" fill="#2ec940"/><path d="M3.2 8.4 L6.2 11.0 L10.6 3.4" fill="none" stroke="#fff" stroke-width="1.6"/></svg>
<div style="left:1229px;top:762px;width:2px;height:2px;background:#8a8a8a;"></div>
<div style="left:1225px;top:762px;width:2px;height:2px;background:#8a8a8a;"></div>
<div style="left:1221px;top:762px;width:2px;height:2px;background:#8a8a8a;"></div>
<div style="left:1229px;top:758px;width:2px;height:2px;background:#8a8a8a;"></div>
<div style="left:1225px;top:758px;width:2px;height:2px;background:#8a8a8a;"></div>
<div style="left:1229px;top:754px;width:2px;height:2px;background:#8a8a8a;"></div>
</body></html>
